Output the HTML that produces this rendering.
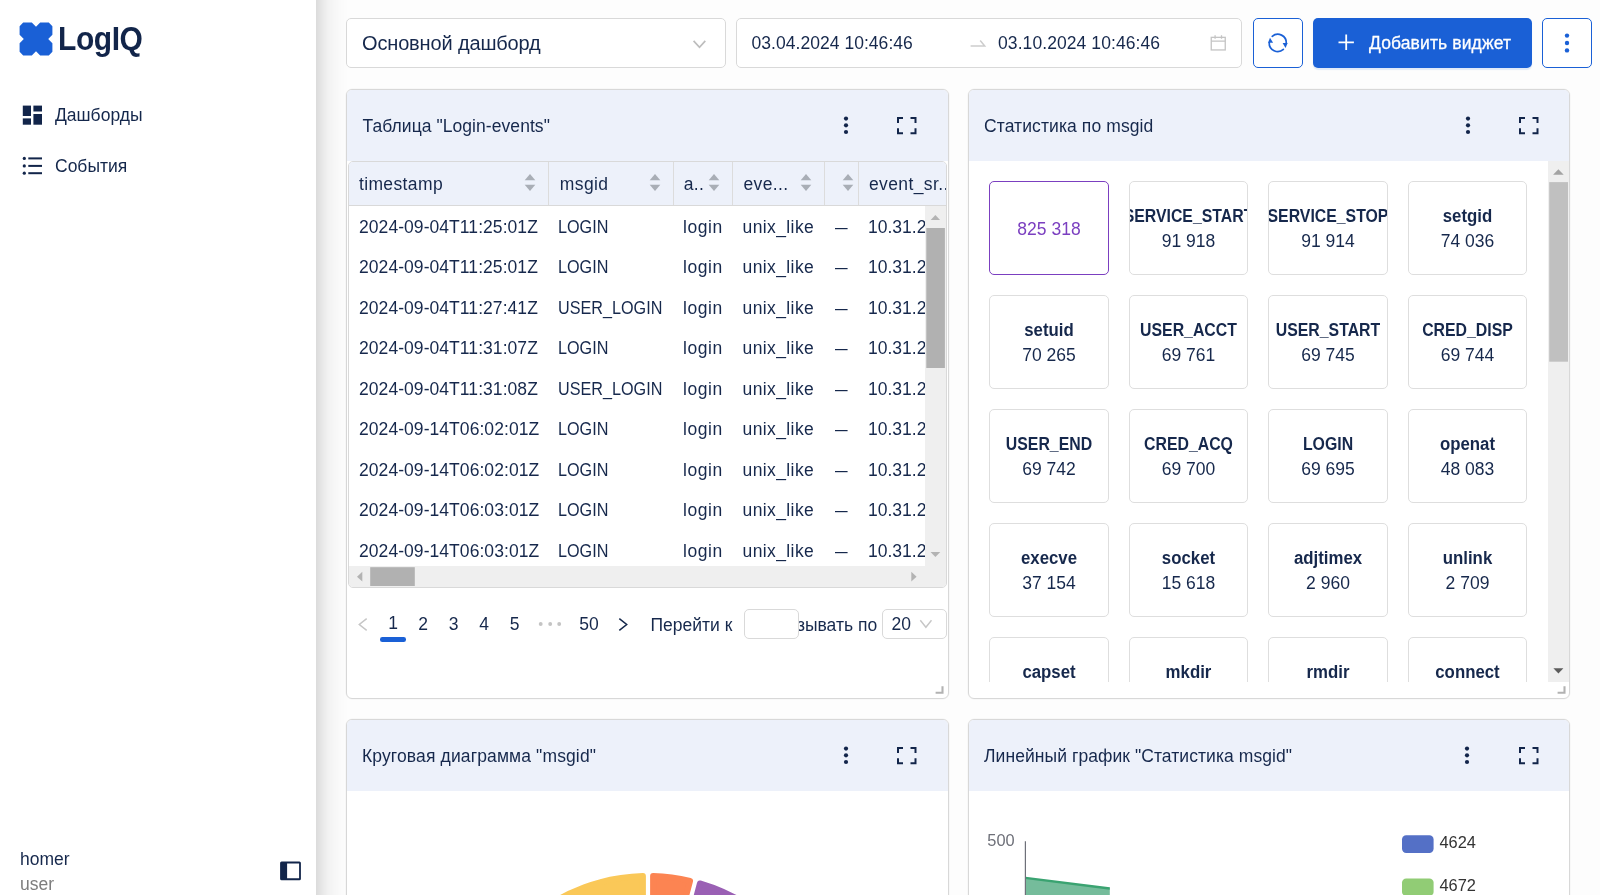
<!DOCTYPE html>
<html lang="ru">
<head>
<meta charset="utf-8">
<title>LogIQ</title>
<style>
*{box-sizing:border-box;margin:0;padding:0}
html,body{width:1600px;height:895px;overflow:hidden;background:#fdfdfd}
body{font-family:"Liberation Sans",sans-serif;font-size:17.5px;color:#16284c;position:relative}
.abs{position:absolute}
#side,.box,.btn,.card{will-change:transform}
svg{display:block;overflow:visible}
/* sidebar */
#side{position:absolute;left:0;top:0;width:316px;height:895px;background:#fff;z-index:5}
#sideshadow{position:absolute;left:316px;top:0;width:32px;height:895px;z-index:4;
 background:linear-gradient(to right,rgba(0,0,0,.135) 0,rgba(0,0,0,.085) 6px,rgba(0,0,0,.045) 12px,rgba(0,0,0,.022) 19px,rgba(0,0,0,.008) 26px,rgba(0,0,0,0) 32px)}
#logotxt{position:absolute;left:58px;top:21.200px;font-weight:700;font-size:30px;line-height:36px;color:#12254a;letter-spacing:-.45px;white-space:nowrap;transform:scaleY(1.118);transform-origin:0 50%}
.nav{position:absolute;left:55px;font-size:17.5px;line-height:22px;white-space:nowrap;color:#14274b}
#uname{position:absolute;left:20px;top:848px;font-size:17.5px;line-height:22px}
#urole{position:absolute;left:20px;top:873px;font-size:17.5px;line-height:22px;color:#7d7d7d}
/* toolbar */
.box{position:absolute;top:18px;height:50px;border:1px solid #d9d9d9;border-radius:5px;background:#fff}
.btn{position:absolute;top:18px;height:50px;border-radius:5px}
.t20{font-size:20px;line-height:24px;white-space:nowrap}
/* cards */
.card{position:absolute;border:1px solid #d8d8d8;border-radius:6px;background:#fff;box-shadow:0 0 0 .5px rgba(0,0,0,.04);overflow:hidden}
.chead{position:absolute;left:0;top:0;right:0;height:71px;background:#edf1fa}
.ctitle{position:absolute;left:15px;top:25px;font-size:17.5px;line-height:22px;white-space:nowrap}

/* card icons */
.ic-more{position:absolute;top:25px;width:8px;height:22px}
.ic-full{position:absolute;top:26.750px;width:20px;height:18px}
/* table */
#tbl{position:absolute;left:1px;top:71px;width:599px;height:427px;border:1px solid #d9d9d9;border-radius:5px;overflow:hidden;background:#fff}
#thead{position:absolute;left:0;top:0;width:597px;height:44px;background:#edf1fa;border-bottom:1px solid #d9d9d9}
.th{position:absolute;top:11px;font-size:17.5px;line-height:22px;white-space:nowrap;letter-spacing:.38px}
.sep{position:absolute;top:0;width:1px;height:43px;background:#dcdcdc}
.sort{position:absolute;top:11px;width:12px;height:20px}
.tr{position:absolute;left:0;width:576px;height:40px;font-size:17.5px;line-height:22px;white-space:nowrap}
.tr span{position:absolute;top:0}
.c1{left:10px;letter-spacing:.06px}.c2{left:209px;transform:scaleX(.925);transform-origin:0 0}.c3{left:334px;letter-spacing:.55px}.c4{left:393.500px;letter-spacing:.4px}.c5{left:486px;transform:scaleX(.72);transform-origin:0 0}.c6{left:519px}
#vs{position:absolute;left:576px;top:44px;width:21px;height:360px;background:#efefef}
#hs{position:absolute;left:0;top:404px;width:597px;height:21px;background:#efefef}
.pg{position:absolute;top:523px;font-size:17.5px;line-height:22px;white-space:nowrap;width:30px;text-align:center}

#tiles{position:absolute;left:0;top:71px;width:579px;height:521px;overflow:hidden}
.tile{position:absolute;width:119px;height:94px;border:1px solid #dedede;border-radius:5px;background:#fff;overflow:hidden;text-align:center;font-size:17.500px;line-height:22px}
.tile b{position:absolute;left:-40px;right:-40px;top:22.500px;font-weight:700;white-space:nowrap;transform:scaleX(.905)}.tile b.lc{transform:scaleX(.96)}
.tile i{position:absolute;left:0;right:0;top:48px;font-style:normal;white-space:nowrap}
#vs2{position:absolute;left:579px;top:71px;width:21px;height:521px;background:#efefef}
</style>
</head>
<body>
<div id="side">
  <svg class="abs" style="left:19px;top:22px" width="34" height="34" viewBox="0 0 34 34"><path fill="#1a60d6" d="M4.2 0.6h8.6l4.2 4.2 4.2-4.2h8.6l3.6 3.6v8.6l-4.2 4.2 4.2 4.2v8.6l-3.6 3.6h-8.6l-4.2-4.2-4.2 4.2H4.2l-3.6-3.6v-8.6l4.2-4.2-4.2-4.2V4.2z"/></svg>
  <div id="logotxt">LogIQ</div>
  <div class="nav" style="top:104px">Дашборды</div>
  <div class="nav" style="top:155px">События</div>

  <svg class="abs" style="left:22px;top:105px" width="21" height="21" viewBox="0 0 21 21"><g fill="#12254a"><rect x="0.8" y="0.6" width="8.2" height="10.4"/><rect x="0.8" y="13.4" width="8.2" height="6.3"/><rect x="11.4" y="0.6" width="8.6" height="5.9"/><rect x="11.4" y="9" width="8.6" height="10.7"/></g></svg>
  <svg class="abs" style="left:22px;top:155px" width="21" height="21" viewBox="0 0 21 21"><g fill="#12254a"><circle cx="2.3" cy="3.4" r="1.6"/><circle cx="2.3" cy="10.9" r="1.6"/><circle cx="2.3" cy="18.2" r="1.6"/><rect x="6.3" y="2.4" width="13.7" height="2"/><rect x="6.3" y="9.9" width="13.7" height="2"/><rect x="6.3" y="17.2" width="13.7" height="2"/></g></svg>
  <svg class="abs" style="left:280px;top:861px" width="21" height="20" viewBox="0 0 21 20"><path fill="#12254a" fill-rule="evenodd" d="M1.6 0.5h17.8a1.5 1.5 0 0 1 1.5 1.5v15.7a1.5 1.5 0 0 1-1.5 1.5H1.6a1.5 1.5 0 0 1-1.5-1.5V2A1.5 1.5 0 0 1 1.600 0.500zM7.100 2.600v14.600h12V2.600z"/></svg>
  <div id="uname">homer</div>
  <div id="urole">user</div>
</div>
<div id="sideshadow"></div>

<!-- toolbar -->
<div class="box" style="left:346px;width:380px"><div class="abs t20" style="left:15px;top:12px;letter-spacing:-.15px">Основной дашборд</div><svg class="abs" style="left:340px;top:15px" width="20" height="20" viewBox="0 0 20 20"><path d="M7.500 6.900l5.900 6.400 5.800-6.400" transform="translate(-0.900 0)" fill="none" stroke="#bdbdbd" stroke-width="1.700"/></svg></div>
<div class="box" style="left:736px;width:506px">
  <div class="abs" style="left:14.500px;top:13px;font-size:17.5px;line-height:22px;white-space:nowrap;letter-spacing:.04px">03.04.2024 10:46:46</div>
  <div class="abs" style="left:261px;top:13px;font-size:17.5px;line-height:22px;white-space:nowrap;letter-spacing:.08px">03.10.2024 10:46:46</div>
  <svg class="abs" style="left:232px;top:18px" width="20" height="12" viewBox="0 0 20 12"><path d="M1.600 8.900h14.100L11.200 3.500" fill="none" stroke="#cdcdcd" stroke-width="1.500" stroke-linejoin="miter"/></svg>
  <svg class="abs" style="left:472px;top:15px" width="20" height="20" viewBox="0 0 20 20"><g fill="none" stroke="#c4c4c4" stroke-width="1.300"><rect x="2.250" y="3.350" width="14" height="12.600"/><path d="M2.250 7.200h14M6.100 1.200v3.500M12.500 1.200v3.500"/></g></svg>
</div>
<div class="btn" style="left:1253px;width:50px;border:1px solid #1a60d6;background:#fff"><svg class="abs" style="left:8px;top:9px" width="32" height="30" viewBox="0 0 32 30"><g fill="none" stroke="#1a60d6" stroke-width="1.700" stroke-linecap="round"><path d="M10.200 8.300A8.550 8.550 0 0 1 24.300 15.200"/><path d="M21.400 21.400A8.550 8.550 0 0 1 7.200 14.700"/></g><g fill="#1a60d6"><path d="M20.600 15.100h5.100l-2.150 5z"/><path d="M6 14.800h5.100L8 9.700z"/></g></svg></div>
<div class="btn" style="left:1313px;width:219px;background:#1a60d6;box-shadow:0 2px 1px rgba(26,96,214,.12)"><svg class="abs" style="left:25px;top:16px" width="17" height="17" viewBox="0 0 17 17"><path d="M8.200 0.600v15.400M0.500 8.300h15.400" stroke="#fff" stroke-width="1.800" fill="none"/></svg><div class="abs" style="left:56px;top:14px;color:#fff;font-size:17.5px;line-height:22px;white-space:nowrap;letter-spacing:.12px;-webkit-text-stroke:.3px #fff">Добавить виджет</div></div>
<div class="btn" style="left:1542px;width:50px;border:1px solid #1a60d6;background:#fff"><svg class="abs" style="left:19px;top:13px" width="10" height="24" viewBox="0 0 10 24"><g fill="#1a60d6"><circle cx="5" cy="3.600" r="2.200"/><circle cx="5" cy="11" r="2.200"/><circle cx="5" cy="18.400" r="2.200"/></g></svg></div>

<!-- cards -->
<div class="card" id="c1" style="left:346px;top:89px;width:603px;height:610px"><div class="chead"></div><div class="ctitle" style="left:15.500px;letter-spacing:.06px">Таблица "Login-events"</div><svg class="ic-more" style="left:495.25px" viewBox="0 0 8 22"><g fill="#12254a"><circle cx="4" cy="3.600" r="2.100"/><circle cx="4" cy="10.300" r="2.100"/><circle cx="4" cy="17" r="2.100"/></g></svg><svg class="ic-full" style="left:550.200px" viewBox="0 0 20 18"><path fill="none" stroke="#12254a" stroke-width="2" d="M1 6V1h5M13.500 1h5v5M18.500 11.250v5h-5M6 16.250H1v-5"/></svg><div id="tbl"><div id="thead"><div class="sep" style="left:199px"></div><div class="sep" style="left:324px"></div><div class="sep" style="left:383px"></div><div class="sep" style="left:475px"></div><div class="sep" style="left:509px"></div><div class="th" style="left:9.899999999999977px">timestamp</div><div class="th" style="left:210.79999999999995px">msgid</div><div class="th" style="left:334.70000000000005px">a..</div><div class="th" style="left:394.4px">eve...</div><div class="th" style="left:520.0px">event_sr...</div><svg class="sort" style="left:175.29999999999995px" viewBox="0 0 12 20"><g fill="#a9aeb6"><path d="M6 1l5.300 6.300H0.700z"/><path d="M6 18l5.300-6.200H0.700z"/></g></svg><svg class="sort" style="left:299.70000000000005px" viewBox="0 0 12 20"><g fill="#a9aeb6"><path d="M6 1l5.300 6.300H0.700z"/><path d="M6 18l5.300-6.200H0.700z"/></g></svg><svg class="sort" style="left:359.4px" viewBox="0 0 12 20"><g fill="#a9aeb6"><path d="M6 1l5.300 6.300H0.700z"/><path d="M6 18l5.300-6.200H0.700z"/></g></svg><svg class="sort" style="left:451.29999999999995px" viewBox="0 0 12 20"><g fill="#a9aeb6"><path d="M6 1l5.300 6.300H0.700z"/><path d="M6 18l5.300-6.200H0.700z"/></g></svg><svg class="sort" style="left:492.75px" viewBox="0 0 12 20"><g fill="#a9aeb6"><path d="M6 1l5.300 6.300H0.700z"/><path d="M6 18l5.300-6.200H0.700z"/></g></svg></div>
<div class="tr" style="top:53.5px"><span class="c1">2024-09-04T11:25:01Z</span><span class="c2">LOGIN</span><span class="c3">login</span><span class="c4">unix_like</span><span class="c5">—</span><span class="c6">10.31.2</span></div>
<div class="tr" style="top:94.0px"><span class="c1">2024-09-04T11:25:01Z</span><span class="c2">LOGIN</span><span class="c3">login</span><span class="c4">unix_like</span><span class="c5">—</span><span class="c6">10.31.2</span></div>
<div class="tr" style="top:134.5px"><span class="c1">2024-09-04T11:27:41Z</span><span class="c2">USER_LOGIN</span><span class="c3">login</span><span class="c4">unix_like</span><span class="c5">—</span><span class="c6">10.31.2</span></div>
<div class="tr" style="top:175.0px"><span class="c1">2024-09-04T11:31:07Z</span><span class="c2">LOGIN</span><span class="c3">login</span><span class="c4">unix_like</span><span class="c5">—</span><span class="c6">10.31.2</span></div>
<div class="tr" style="top:215.5px"><span class="c1">2024-09-04T11:31:08Z</span><span class="c2">USER_LOGIN</span><span class="c3">login</span><span class="c4">unix_like</span><span class="c5">—</span><span class="c6">10.31.2</span></div>
<div class="tr" style="top:256.0px"><span class="c1">2024-09-14T06:02:01Z</span><span class="c2">LOGIN</span><span class="c3">login</span><span class="c4">unix_like</span><span class="c5">—</span><span class="c6">10.31.2</span></div>
<div class="tr" style="top:296.5px"><span class="c1">2024-09-14T06:02:01Z</span><span class="c2">LOGIN</span><span class="c3">login</span><span class="c4">unix_like</span><span class="c5">—</span><span class="c6">10.31.2</span></div>
<div class="tr" style="top:337.0px"><span class="c1">2024-09-14T06:03:01Z</span><span class="c2">LOGIN</span><span class="c3">login</span><span class="c4">unix_like</span><span class="c5">—</span><span class="c6">10.31.2</span></div>
<div class="tr" style="top:377.5px"><span class="c1">2024-09-14T06:03:01Z</span><span class="c2">LOGIN</span><span class="c3">login</span><span class="c4">unix_like</span><span class="c5">—</span><span class="c6">10.31.2</span></div>
<div id="vs"><svg class="abs" style="left:0;top:0" width="21" height="360" viewBox="0 0 21 360"><path fill="#b3b3b3" d="M10.400 9l4.700 5H5.700z"/><rect x="1.300" y="22" width="18.600" height="140" fill="#b1b1b1"/><path fill="#b3b3b3" d="M10.400 351l4.900-5H5.500z"/></svg></div><div id="hs"><svg class="abs" style="left:0;top:0" width="597" height="21" viewBox="0 0 597 21"><path fill="#b3b3b3" d="M8 10.700l5.300-4.900v9.800z"/><rect x="21.200" y="1.200" width="44.600" height="18.800" fill="#b1b1b1"/><path fill="#b3b3b3" d="M567.600 10.700l-5.300-4.900v9.800z"/></svg></div></div><svg class="abs" style="left:10px;top:527px" width="12" height="15" viewBox="0 0 12 15"><path d="M9.700 1.700L2.300 7.500l7.400 5.800" fill="none" stroke="#c6c6c6" stroke-width="1.500"/></svg><div class="pg" style="left:31px;top:521.5px">1</div><div class="abs" style="left:33.300px;top:547.200px;width:25.500px;height:4.600px;border-radius:2.300px;background:#1a60d6"></div><div class="pg" style="left:61px;">2</div><div class="pg" style="left:91.60000000000002px;">3</div><div class="pg" style="left:122px;">4</div><div class="pg" style="left:152.60000000000002px;">5</div><div class="pg" style="left:226.89999999999998px;">50</div><svg class="abs" style="left:190px;top:530px" width="26" height="8" viewBox="0 0 26 8"><g fill="#c4c4c4"><circle cx="3.700" cy="4" r="1.950"/><circle cx="13.200" cy="4" r="1.950"/><circle cx="22.200" cy="4" r="1.950"/></g></svg><svg class="abs" style="left:270px;top:527px" width="12" height="15" viewBox="0 0 12 15"><path d="M2.300 1.700l7.400 5.800-7.400 5.800" fill="none" stroke="#14274b" stroke-width="1.500"/></svg><div class="abs" style="left:303.500px;top:524px;font-size:17.500px;line-height:22px;white-space:nowrap">Перейти к</div><div class="abs" style="left:410px;top:524px;font-size:17.500px;line-height:22px;white-space:nowrap" id="showby">Показывать по</div><div class="abs" style="left:396.500px;top:518.500px;width:55.500px;height:30px;border:1px solid #d9d9d9;border-radius:5px;background:#fff"></div><div class="abs" style="left:534.500px;top:518.500px;width:65.500px;height:30px;border:1px solid #d9d9d9;border-radius:5px;background:#fff"><div class="abs" style="left:9px;top:3px;font-size:17.500px;line-height:22px">20</div><svg class="abs" style="left:36px;top:9px" width="14" height="10" viewBox="0 0 14 10"><path d="M1.300 1.300l5.600 7 5.600-7" fill="none" stroke="#c6c6c6" stroke-width="1.400"/></svg></div><svg class="abs" style="left:588px;top:596px" width="9" height="8" viewBox="0 0 9 8"><path d="M7.500 0.200v6.500H0.600" fill="none" stroke="#b2b2b2" stroke-width="2.100"/></svg></div>
<div class="card" id="c2" style="left:968px;top:89px;width:602px;height:610px"><div class="chead"></div><div class="ctitle" style="letter-spacing:.1px">Статистика по msgid</div><svg class="ic-more" style="left:494.7000000000001px" viewBox="0 0 8 22"><g fill="#12254a"><circle cx="4" cy="3.600" r="2.100"/><circle cx="4" cy="10.300" r="2.100"/><circle cx="4" cy="17" r="2.100"/></g></svg><svg class="ic-full" style="left:550.200px" viewBox="0 0 20 18"><path fill="none" stroke="#12254a" stroke-width="2" d="M1 6V1h5M13.500 1h5v5M18.500 11.250v5h-5M6 16.250H1v-5"/></svg><div id="tiles"><div class="tile" style="left:20px;top:20.3px;width:120px;border-color:#7b3fc0;color:#7b3fc0"><i style="top:35.500px">825 318</i></div><div class="tile" style="left:160px;top:20.3px"><b>SERVICE_START</b><i>91 918</i></div><div class="tile" style="left:299px;top:20.3px;width:120px"><b>SERVICE_STOP</b><i>91 914</i></div><div class="tile" style="left:439px;top:20.3px"><b class="lc">setgid</b><i>74 036</i></div><div class="tile" style="left:20px;top:134.3px;width:120px"><b class="lc">setuid</b><i>70 265</i></div><div class="tile" style="left:160px;top:134.3px"><b>USER_ACCT</b><i>69 761</i></div><div class="tile" style="left:299px;top:134.3px;width:120px"><b>USER_START</b><i>69 745</i></div><div class="tile" style="left:439px;top:134.3px"><b>CRED_DISP</b><i>69 744</i></div><div class="tile" style="left:20px;top:248.3px;width:120px"><b>USER_END</b><i>69 742</i></div><div class="tile" style="left:160px;top:248.3px"><b>CRED_ACQ</b><i>69 700</i></div><div class="tile" style="left:299px;top:248.3px;width:120px"><b>LOGIN</b><i>69 695</i></div><div class="tile" style="left:439px;top:248.3px"><b class="lc">openat</b><i>48 083</i></div><div class="tile" style="left:20px;top:362.3px;width:120px"><b class="lc">execve</b><i>37 154</i></div><div class="tile" style="left:160px;top:362.3px"><b class="lc">socket</b><i>15 618</i></div><div class="tile" style="left:299px;top:362.3px;width:120px"><b class="lc">adjtimex</b><i>2 960</i></div><div class="tile" style="left:439px;top:362.3px"><b class="lc">unlink</b><i>2 709</i></div><div class="tile" style="left:20px;top:476.3px;width:120px"><b class="lc">capset</b><i>1 204</i></div><div class="tile" style="left:160px;top:476.3px"><b class="lc">mkdir</b><i>1 102</i></div><div class="tile" style="left:299px;top:476.3px;width:120px"><b class="lc">rmdir</b><i>987</i></div><div class="tile" style="left:439px;top:476.3px"><b class="lc">connect</b><i>954</i></div></div><div id="vs2"><svg class="abs" style="left:0;top:0" width="21" height="521" viewBox="0 0 21 521"><path fill="#a3a3a3" d="M10.400 8.300l5.300 5.400H5.100z"/><rect x="1.200" y="21.100" width="18.800" height="179.600" fill="#c0c0c0"/><path fill="#5c5c5c" d="M10.400 512.500l5-5.200H5.400z"/></svg></div><svg class="abs" style="left:588px;top:596px" width="9" height="8" viewBox="0 0 9 8"><path d="M7.500 0.200v6.500H0.600" fill="none" stroke="#b2b2b2" stroke-width="2.100"/></svg></div>
<div class="card" id="c3" style="left:346px;top:719px;width:603px;height:300px"><div class="chead"></div><div class="ctitle" style="letter-spacing:.13px">Круговая диаграмма "msgid"</div><svg class="ic-more" style="left:495.25px" viewBox="0 0 8 22"><g fill="#12254a"><circle cx="4" cy="3.600" r="2.100"/><circle cx="4" cy="10.300" r="2.100"/><circle cx="4" cy="17" r="2.100"/></g></svg><svg class="ic-full" style="left:550.2px" viewBox="0 0 20 18"><path fill="none" stroke="#12254a" stroke-width="2" d="M1 6V1h5M13.500 1h5v5M18.500 11.250v5h-5M6 16.250H1v-5"/></svg><svg class="abs" style="left:0;top:71px" width="601" height="230" viewBox="0 71 601 230"><path d="M229.08 322.14L120.75 303.04A184.0 184.0 0 0 1 295.90 156.07L295.90 266.07Z" fill="#fac858" stroke="#fac858" stroke-width="6.0" stroke-linejoin="round"/><path d="M306.10 266.07L306.10 156.07A184.0 184.0 0 0 1 343.05 160.87L314.95 267.22Z" fill="#fc8452" stroke="#fc8452" stroke-width="6.0" stroke-linejoin="round"/><path d="M324.82 269.83L352.91 163.48A184.0 184.0 0 0 1 481.25 303.04L372.92 322.14Z" fill="#9a60b4" stroke="#9a60b4" stroke-width="6.0" stroke-linejoin="round"/></svg></div>
<div class="card" id="c4" style="left:968px;top:719px;width:602px;height:300px"><div class="chead"></div><div class="ctitle" style="letter-spacing:.07px">Линейный график "Статистика msgid"</div><svg class="ic-more" style="left:494.20000000000005px" viewBox="0 0 8 22"><g fill="#12254a"><circle cx="4" cy="3.600" r="2.100"/><circle cx="4" cy="10.300" r="2.100"/><circle cx="4" cy="17" r="2.100"/></g></svg><svg class="ic-full" style="left:550px" viewBox="0 0 20 18"><path fill="none" stroke="#12254a" stroke-width="2" d="M1 6V1h5M13.500 1h5v5M18.500 11.250v5h-5M6 16.250H1v-5"/></svg><svg class="abs" style="left:0;top:71px" width="600" height="230" viewBox="0 71 600 230"><path d="M56.4 157.9L140.8 168.5V300H56.4Z" fill="#75bc9b"/><path d="M56.4 157.9L140.8 168.5" fill="none" stroke="#3aa371" stroke-width="2.400"/><path d="M56.4 121.2V300" fill="none" stroke="#6e7079" stroke-width="1.200"/><text x="45.700" y="125.800" text-anchor="end" font-family="Liberation Sans, sans-serif" font-size="16.400" fill="#6e7079">500</text><rect x="433" y="115.300" width="31.600" height="17.700" rx="4.200" fill="#5470c6"/><rect x="433" y="158.400" width="31.600" height="17.700" rx="4.200" fill="#91cc75"/><text x="470.5" y="128.100" font-family="Liberation Sans, sans-serif" font-size="16.400" fill="#333">4624</text><text x="470.5" y="171.200" font-family="Liberation Sans, sans-serif" font-size="16.400" fill="#333">4672</text></svg></div>
</body>
</html>
